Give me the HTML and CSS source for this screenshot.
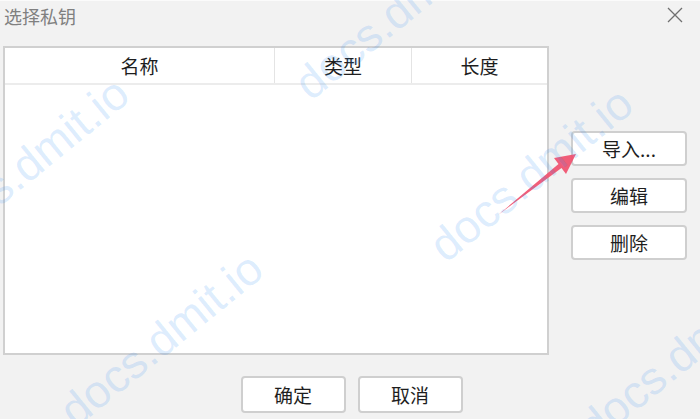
FILE: index.html
```html
<!DOCTYPE html>
<html>
<head>
  <title>选择私钥</title>
  <link rel="stylesheet" href="styles.css">
</head>
<body>
  <div class="dialog">
    <div class="titlebar">
      <div class="title">选择私钥</div>
      <svg class="close" width="16" height="16" viewBox="0 0 16 16">
        <path d="M1 1 L15 15 M15 1 L1 15" stroke="#707070" stroke-width="1.3" fill="none"/>
      </svg>
    </div>

    <div class="main">
      <div class="key-list">
        <div class="list-head">
          <div class="col">名称</div>
          <div class="col">类型</div>
          <div class="col last">长度</div>
        </div>
        <div class="list-body"></div>
      </div>

      <div class="side-buttons">
        <button class="btn side">导入...</button>
        <button class="btn side">编辑</button>
        <button class="btn side">删除</button>
      </div>
    </div>

    <div class="footer">
      <button class="btn foot">确定</button>
      <button class="btn foot">取消</button>
    </div>
  </div>

  <svg class="arrow" width="700" height="419" viewBox="0 0 700 419">
    <polygon points="498,215 558.5,164 554,158 576,154 566,174 561.5,168" fill="#f0506e" fill-opacity="0.92"/>
  </svg>

  <div class="watermarks">
    <div class="wm wm-1">docs.dmit.io</div>
    <div class="wm wm-2">docs.dmit.io</div>
    <div class="wm wm-3">docs.dmit.io</div>
    <div class="wm wm-4">docs.dmit.io</div>
    <div class="wm wm-5">docs.dmit.io</div>
  </div>
</body>
</html>
```

FILE: styles.css
```css
body {
  margin: 0;
  width: 700px;
  height: 419px;
  background: #f2f2f2;
  font-family: "Noto Sans CJK SC", sans-serif;
  color: #1e1e1e;
  position: relative;
  overflow: hidden;
}

.dialog {
  display: flex;
  flex-direction: column;
  border-top: 1px solid #fbfbfb;
}

.titlebar {
  height: 45px;
  display: flex;
  justify-content: space-between;
  align-items: flex-start;
  padding: 0 17px 0 4px;
}

.title {
  font-size: 18px;
  line-height: 30px;
  color: #808080;
}

.close {
  margin-top: 6px;
}

.main {
  display: flex;
  padding-left: 3px;
  height: 309px;
}

.key-list {
  width: 546px;
  height: 309px;
  box-sizing: border-box;
  border: 2px solid #d0d0d0;
  background: #fff;
}

.list-head {
  display: grid;
  grid-template-columns: 270px 137px 1fr;
  height: 35px;
  border-bottom: 2px solid #ececec;
}

.col {
  display: flex;
  align-items: center;
  justify-content: center;
  font-size: 19px;
  border-right: 1px solid #e4e4e4;
}

.col.last {
  border-right: none;
}

.side-buttons {
  display: flex;
  flex-direction: column;
  gap: 12px;
  margin-left: 22px;
  padding-top: 85px;
}

.btn {
  box-sizing: border-box;
  background: #fff;
  border: 2px solid #cfcfcf;
  border-radius: 4px;
  font-family: "Noto Sans CJK SC", sans-serif;
  font-size: 19px;
  color: #1e1e1e;
  padding: 0;
  line-height: 1;
}

.btn.side {
  width: 116px;
  height: 35px;
}

.footer {
  display: flex;
  justify-content: center;
  gap: 12px;
  padding: 21px 0 0 3px;
}

.btn.foot {
  width: 105px;
  height: 37px;
}

.arrow {
  position: absolute;
  left: 0;
  top: 0;
}

/* watermark overlay, cut off at the window edges like the original */
.watermarks {
  position: absolute;
  inset: 0;
  pointer-events: none;
  overflow: hidden;
}

.wm {
  position: absolute;
  font-family: "Liberation Sans", sans-serif;
  font-size: 46px;
  line-height: 1;
  white-space: nowrap;
  color: rgba(50, 140, 245, 0.17);
  transform: translate(-50%, -50%) rotate(-39deg);
}

.wm-1 { left: 396px; top: 12px; }
.wm-2 { left: 27px; top: 164px; }
.wm-3 { left: 161px; top: 339px; }
.wm-4 { left: 531px; top: 174px; }
.wm-5 { left: 680px; top: 355px; }
```
